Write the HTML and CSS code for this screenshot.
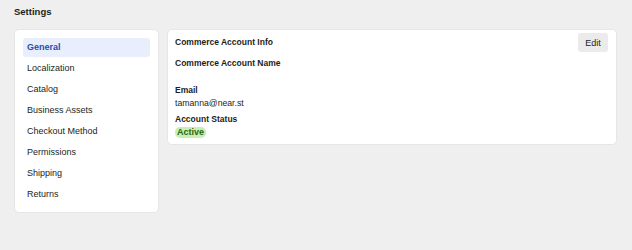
FILE: index.html
```html
<!DOCTYPE html>
<html>
<head>
<meta charset="utf-8">
<link rel="stylesheet" href="styles.css">
</head>
<body>
<div class="page">
  <h1 class="title">Settings</h1>
  <div class="layout">
    <nav class="card nav">
      <div class="nav-item active">General</div>
      <div class="nav-item">Localization</div>
      <div class="nav-item">Catalog</div>
      <div class="nav-item">Business Assets</div>
      <div class="nav-item">Checkout Method</div>
      <div class="nav-item">Permissions</div>
      <div class="nav-item">Shipping</div>
      <div class="nav-item">Returns</div>
    </nav>
    <section class="card info">
      <div class="info-head">
        <div class="info-title">Commerce Account Info</div>
        <button class="edit">Edit</button>
      </div>
      <div class="field field-first">
        <div class="label">Commerce Account Name</div>
        <div class="value empty"></div>
      </div>
      <div class="field">
        <div class="label">Email</div>
        <div class="value">tamanna@near.st</div>
      </div>
      <div class="field">
        <div class="label">Account Status</div>
        <div class="value"><span class="badge">Active</span></div>
      </div>
    </section>
  </div>
</div>
</body>
</html>
```

FILE: styles.css
```css
* { box-sizing: border-box; }
html, body {
  margin: 0;
  padding: 0;
  background: #efefef;
  font-family: "Liberation Sans", Arial, sans-serif;
  color: #1c1e21;
}
.page {
  padding: 5px 15px 0 14px;
}
.title {
  margin: 0;
  font-size: 9.5px;
  font-weight: bold;
  line-height: 14px;
}
.layout {
  display: flex;
  align-items: flex-start;
  gap: 8px;
  margin-top: 10px;
}
.card {
  background: #fff;
  border: 1px solid #e6e6e6;
  border-radius: 5px;
}
.nav {
  width: 145px;
  padding: 8px 8px 8px 8px;
  display: flex;
  flex-direction: column;
  gap: 2px;
}
.nav-item {
  height: 19px;
  line-height: 19px;
  padding: 0 4px;
  font-size: 9px;
  border-radius: 3px;
  color: #1c1e21;
}
.nav-item.active {
  background: #e8eefc;
  color: #2a4bb0;
  font-weight: bold;
}
.info {
  flex: 1;
  padding: 3px 8px 5px 7px;
}
.info-head {
  display: flex;
  justify-content: space-between;
  align-items: flex-start;
  height: 19px;
}
.info-title {
  font-size: 8.5px;
  font-weight: bold;
  line-height: 12px;
  margin-top: 3px;
}
.edit {
  border: none;
  background: #ebebeb;
  border-radius: 3px;
  height: 19px;
  width: 30px;
  padding: 0;
  font-family: "Liberation Sans", Arial, sans-serif;
  font-size: 9px;
  color: #1c1e21;
}
.field {
  margin-top: 3px;
}
.field.field-first {
  margin-top: 5px;
}
.label {
  font-size: 8.5px;
  font-weight: bold;
  line-height: 13px;
}
.value {
  font-size: 8.7px;
  line-height: 13px;
}
.value.empty {
  height: 11px;
}
.badge {
  display: inline-block;
  background: #c8efb2;
  color: #27661a;
  font-weight: bold;
  font-size: 9px;
  line-height: 11px;
  padding: 0 2px;
  border-radius: 5px;
}
```
